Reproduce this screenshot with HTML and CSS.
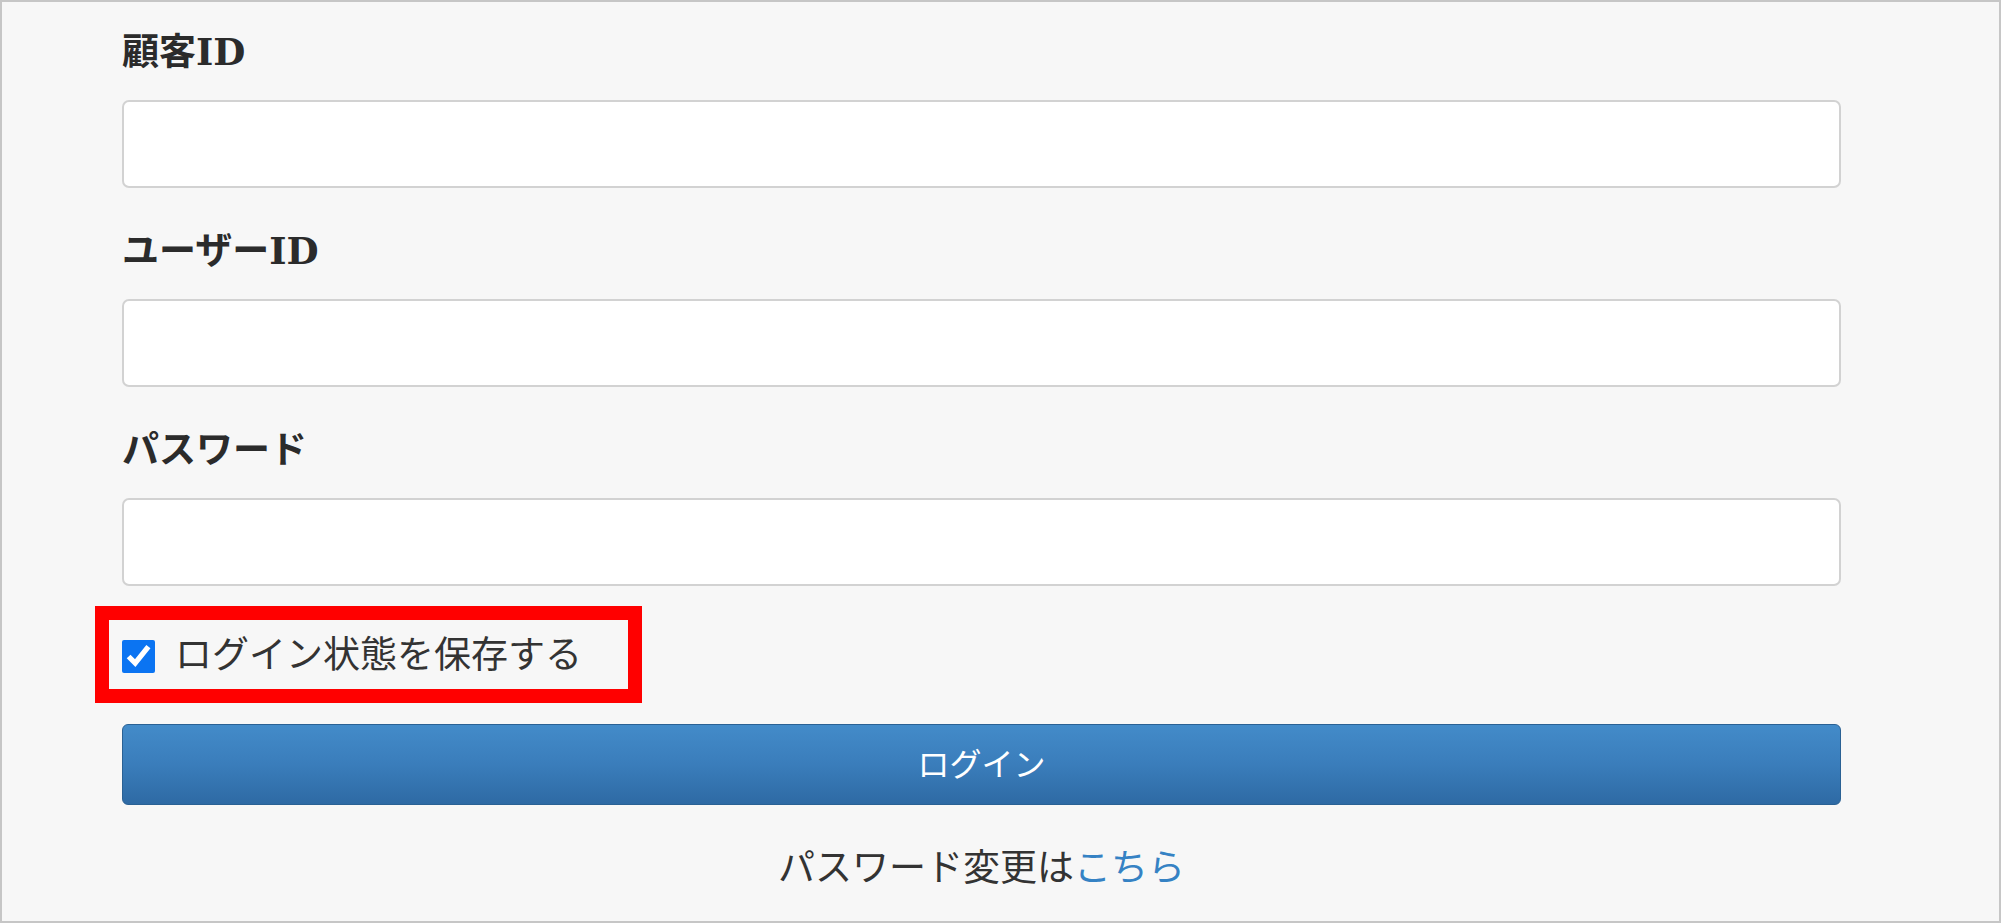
FILE: index.html
```html
<!DOCTYPE html>
<html lang="ja">
<head>
<meta charset="utf-8">
<title>ログイン</title>
<link rel="stylesheet" href="styles.css">
</head>
<body>
<div class="frame">
  <form class="login-form">
    <div class="field">
      <label class="field-label" for="customer">顧客ID</label>
      <input class="field-input" id="customer" type="text">
    </div>
    <div class="field">
      <label class="field-label" for="user">ユーザーID</label>
      <input class="field-input" id="user" type="text">
    </div>
    <div class="field">
      <label class="field-label" for="pass">パスワード</label>
      <input class="field-input" id="pass" type="password">
    </div>
    <div class="highlight">
      <label class="remember">
        <input class="remember-check" type="checkbox" checked>
        <span class="remember-text">ログイン状態を保存する</span>
      </label>
    </div>
    <button class="login-button" type="button">ログイン</button>
    <p class="change-pass">パスワード変更は<a class="change-link" href="#">こちら</a></p>
  </form>
</div>
</body>
</html>
```
FILE: styles.css
```css
html, body {
  margin: 0;
  padding: 0;
  background: #f7f7f7;
}

body {
  font-family: "Noto Sans CJK JP", "Noto Sans", sans-serif;
  color: #333333;
}

.frame {
  box-sizing: border-box;
  width: 2001px;
  height: 923px;
  border: 2px solid #c6c6c6;
  background: #f7f7f7;
  padding: 32px 158px 0 120px;
}

.login-form {
  display: flex;
  flex-direction: column;
}

.field {
  display: flex;
  flex-direction: column;
}

.field + .field {
  margin-top: 45px;
}

.field-label {
  font-family: "DejaVu Serif", "Noto Sans CJK JP", serif;
  font-weight: bold;
  font-size: 37px;
  line-height: 37px;
  color: #2b2b2b;
  margin-bottom: 29px;
}

.field-input {
  box-sizing: border-box;
  width: 100%;
  height: 88px;
  margin: 0;
  border: 2px solid #d2d2d2;
  border-radius: 7px;
  background: #ffffff;
  font-size: 32px;
  padding: 0 18px;
  outline: none;
}

.highlight {
  box-sizing: border-box;
  width: 547px;
  height: 97px;
  margin: 20px 0 0 -27px;
  border: 14px solid #ff0000;
  display: flex;
  align-items: center;
  padding-left: 13px;
}

.remember {
  display: flex;
  align-items: center;
  gap: 20px;
}

.remember-check {
  width: 33px;
  height: 33px;
  margin: 4px 0 0 0;
  accent-color: #0b74f2;
}

.remember-text {
  font-size: 37px;
  line-height: 37px;
  color: #333333;
  margin-top: -4px;
}

.login-button {
  box-sizing: border-box;
  width: 100%;
  height: 81px;
  margin-top: 21px;
  border: 1px solid #2a6194;
  border-radius: 6px;
  background: linear-gradient(to bottom, #438bc9 0%, #3a7dbb 50%, #2e6aa4 100%);
  color: #ffffff;
  font-family: "Noto Sans CJK JP", "Noto Sans", sans-serif;
  font-size: 32px;
  line-height: 32px;
  padding: 0 0 6px 0;
}

.change-pass {
  margin: 42px 0 0 0;
  text-align: center;
  font-size: 37px;
  line-height: 37px;
  color: #333333;
}

.change-link {
  color: #3582c4;
  text-decoration: none;
}
```
